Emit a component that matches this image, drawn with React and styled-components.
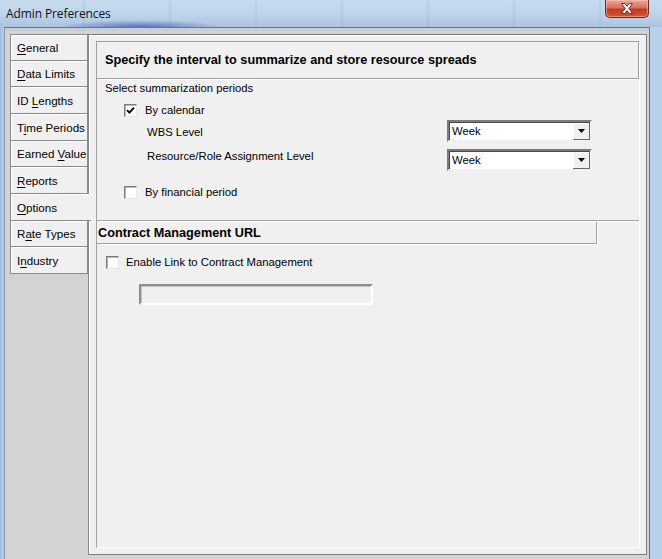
import React from 'react';
import styled, { createGlobalStyle } from 'styled-components';

const Global = createGlobalStyle`
  html, body { margin: 0; padding: 0; width: 662px; height: 559px; overflow: hidden; }
  body { font-family: "Liberation Sans", Arial, sans-serif; font-size: 11.3px; color: #000; }
  * { box-sizing: border-box; }
`;

const Window = styled.div`
  width: 662px;
  height: 559px;
  display: flex;
  flex-direction: column;
  background: linear-gradient(to right, #9fbfe3 0, #b8d0ea 4px, #b8d0ea 100%);
`;

const TitleBar = styled.div`
  height: 27px;
  flex: none;
  display: flex;
  align-items: flex-start;
  background:
    radial-gradient(ellipse 80px 7px at 140px 27px, rgba(40, 55, 170, 0.6), rgba(40, 55, 170, 0) 100%),
    repeating-linear-gradient(to right, rgba(255,255,255,0) 0, rgba(255,255,255,0) 82px, rgba(120,150,190,0.18) 84px, rgba(255,255,255,0) 86px),
    linear-gradient(to bottom, #c9dcef 0, #bcd2e9 60%, #aac3df 100%);
`;

const Title = styled.div`
  font-family: "Open Sans", "Noto Sans", sans-serif;
  font-size: 12px;
  color: #111;
  margin: 5px 0 0 6px;
  letter-spacing: -0.1px;
`;

const CloseButton = styled.div`
  margin-left: auto;
  margin-right: 13px;
  width: 44px;
  height: 18px;
  border: 1px solid #6e2a20;
  border-top: none;
  border-radius: 0 0 5px 5px;
  background: linear-gradient(to bottom, #e9a99a 0, #d9705a 45%, #c23a22 55%, #d3553a 100%);
  box-shadow: inset 0 0 0 1px rgba(255, 200, 190, 0.5);
  display: flex;
  align-items: center;
  justify-content: center;
`;

const Client = styled.div`
  flex: 1;
  display: flex;
  margin: 0 12px 0 4px;
  background: #d3d3d3;
  border-top: 1px solid #6b7480;
  border-left: 1px solid #8a96a4;
  border-right: 1px solid #6b7480;
  padding: 6px 2px 4px 5px;
  box-shadow: inset 0 3px 0 #c8ced6;
`;

const TabColumn = styled.div`
  width: 78px;
  flex: none;
  display: flex;
  flex-direction: column;
  position: relative;
  z-index: 1;
`;

const Tab = styled.div`
  height: ${p => p.$h}px;
  width: ${p => (p.$active ? 81 : 78)}px;
  background: #f0f0f0;
  border: 1px solid #8a8a8a;
  border-top: ${p => (p.$first ? '1px solid #8a8a8a' : 'none')};
  border-right: ${p => (p.$active ? 'none' : '1px solid #8a8a8a')};
  box-shadow: inset 1px 1px 0 #ffffff;
  padding-left: 6px;
  display: flex;
  align-items: center;
  white-space: nowrap;
  font-size: 11.6px;
  color: #000;
`;

const Key = styled.span`
  text-decoration: underline;
  text-underline-offset: 2px;
`;

const Panel = styled.div`
  flex: 1;
  display: flex;
  background: #f0f0f0;
  border: 1px solid #7c7c7c;
  border-left: 1px solid #8a8a8a;
  padding: 6px 6px 6px 7px;
  box-shadow: inset 1px 1px 0 #ffffff;
`;

const Inner = styled.div`
  flex: 1;
  display: flex;
  flex-direction: column;
  border-top: 1px solid #a0a0a0;
  border-left: 1px solid #a0a0a0;
  border-right: 1px solid #ffffff;
  border-bottom: 1px solid #ffffff;
`;

const SectionHeader = styled.div`
  height: ${p => p.$h}px;
  width: ${p => p.$w || 'auto'};
  flex: none;
  display: flex;
  align-items: center;
  padding-left: ${p => p.$pad}px;
  font-weight: bold;
  font-size: 12.7px;
  border-right: 1px solid #a0a0a0;
  border-bottom: 1px solid #a0a0a0;
  box-shadow: 1px 1px 0 #ffffff;
`;

const Text = styled.div`
  height: 14px;
  line-height: 14px;
  font-size: 11.3px;
  white-space: nowrap;
  margin-top: ${p => p.$mt || 0}px;
`;

const Row = styled.div`
  display: flex;
  align-items: center;
  gap: ${p => p.$gap}px;
  margin-left: ${p => p.$ml}px;
  margin-top: ${p => p.$mt}px;
`;

const Box = styled.div`
  width: 13px;
  height: 13px;
  flex: none;
  background: #fff;
  border: 1px solid;
  border-color: #7a7a7a #e8e8e8 #e8e8e8 #7a7a7a;
  box-shadow: inset 1px 1px 0 #b8b8b8;
  display: flex;
  align-items: center;
  justify-content: center;
`;

const LevelGrid = styled.div`
  display: grid;
  grid-template-columns: 300px 145px;
  row-gap: 7px;
  margin-left: 50px;
  margin-top: 3px;
  align-items: start;
`;

const SelectBox = styled.div`
  width: 145px;
  height: 22px;
  display: flex;
  background: #fff;
  border: 2px solid;
  border-color: #7c7c7c #f0f0f0 #f0f0f0 #7c7c7c;
  box-shadow: inset 1px 1px 0 #4a4a4a;
`;

const SelectValue = styled.div`
  flex: 1;
  padding-left: 3px;
  display: flex;
  align-items: center;
  font-size: 11.3px;
  color: #000;
`;

const ArrowButton = styled.div`
  width: 17px;
  margin: 1px 0 0 0;
  background: #f0f0f0;
  border-right: 1px solid #6a6a6a;
  border-bottom: 1px solid #6a6a6a;
  box-shadow: inset 1px 1px 0 #ffffff;
  display: flex;
  align-items: center;
  justify-content: center;
`;

const Separator = styled.div`
  height: 2px;
  flex: none;
  margin-top: ${p => p.$mt}px;
  border-top: 1px solid #a0a0a0;
  border-bottom: 1px solid #ffffff;
`;

const UrlInput = styled.div`
  width: 234px;
  height: 21px;
  margin-left: 42px;
  margin-top: 15px;
  background: #f0f0f0;
  border: 2px solid;
  border-color: #8e8e8e #ffffff #ffffff #8e8e8e;
  box-shadow: inset 1px 1px 0 #c4c4c4;
`;

const Check = ({ checked }) => (
  <Box>
    {checked && (
      <svg width="9" height="9" viewBox="0 0 9 9">
        <path d="M1 4.2 L3.4 6.6 L8 1.6" fill="none" stroke="#000" strokeWidth="1.9" />
      </svg>
    )}
  </Box>
);

const Select = ({ value }) => (
  <SelectBox>
    <SelectValue>{value}</SelectValue>
    <ArrowButton>
      <svg width="7" height="4" viewBox="0 0 7 4">
        <path d="M0 0 H7 L3.5 4 Z" fill="#000" />
      </svg>
    </ArrowButton>
  </SelectBox>
);

const tabs = [
  { pre: '', key: 'G', post: 'eneral', h: 27 },
  { pre: '', key: 'D', post: 'ata Limits', h: 26 },
  { pre: 'ID ', key: 'L', post: 'engths', h: 27 },
  { pre: 'T', key: 'i', post: 'me Periods', h: 27 },
  { pre: 'Earned ', key: 'V', post: 'alue', h: 26 },
  { pre: '', key: 'R', post: 'eports', h: 27 },
  { pre: '', key: 'O', post: 'ptions', h: 27, active: true },
  { pre: 'R', key: 'a', post: 'te Types', h: 26 },
  { pre: 'I', key: 'n', post: 'dustry', h: 27 },
];

export default function App() {
  return (
    <>
      <Global />
      <Window>
        <TitleBar>
          <Title>Admin Preferences</Title>
          <CloseButton>
            <svg width="14" height="11" viewBox="0 0 14 11">
              <path
                d="M1.5 0.5 H4.8 L7 3.4 L9.2 0.5 H12.5 L8.8 5.5 L12.5 10.5 H9.2 L7 7.6 L4.8 10.5 H1.5 L5.2 5.5 Z"
                fill="#ffffff"
                stroke="#6b2418"
                strokeWidth="0.9"
              />
            </svg>
          </CloseButton>
        </TitleBar>
        <Client>
          <TabColumn>
            {tabs.map((t, i) => (
              <Tab key={i} $h={t.h} $first={i === 0} $active={t.active}>
                <span>
                  {t.pre}
                  <Key>{t.key}</Key>
                  {t.post}
                </span>
              </Tab>
            ))}
          </TabColumn>
          <Panel>
            <Inner>
              <SectionHeader $h={37} $pad={8}>
                Specify the interval to summarize and store resource spreads
              </SectionHeader>
              <Row $ml={8} $mt={2} $gap={0}>
                <Text>Select summarization periods</Text>
              </Row>
              <Row $ml={27} $mt={8} $gap={8}>
                <Check checked />
                <Text>By calendar</Text>
              </Row>
              <LevelGrid>
                <Text $mt={5}>WBS Level</Text>
                <Select value="Week" />
                <Text $mt={0}>Resource/Role Assignment Level</Text>
                <Select value="Week" />
              </LevelGrid>
              <Row $ml={27} $mt={14} $gap={8}>
                <Check />
                <Text>By financial period</Text>
              </Row>
              <Separator $mt={21} />
              <SectionHeader $h={22} $pad={1} $w="500px">
                Contract Management URL
              </SectionHeader>
              <Row $ml={9} $mt={11} $gap={7}>
                <Check />
                <Text>Enable Link to Contract Management</Text>
              </Row>
              <UrlInput />
            </Inner>
          </Panel>
        </Client>
      </Window>
    </>
  );
}
